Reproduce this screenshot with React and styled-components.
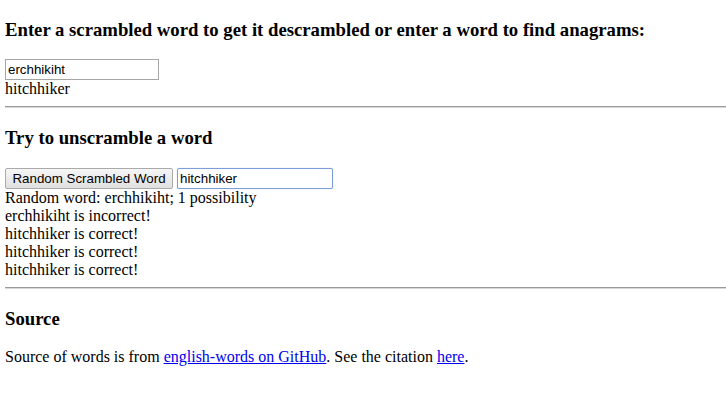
import React from "react";
import styled, { createGlobalStyle } from "styled-components";

const Global = createGlobalStyle`
  html, body { background: #fff; }
  body {
    margin: 0 0 8px 5px;
    font-family: "Liberation Serif", "Times New Roman", serif;
    font-size: 16px;
    color: #000;
  }
`;

const Heading = styled.h3`
  font-family: "Liberation Serif", "Times New Roman", serif;
  font-size: 18.72px;
  font-weight: bold;
  line-height: normal;
  margin: 18.72px 0;
`;

const Rule = styled.hr`
  margin: 8px 0;
  border: none;
  border-top: 1px solid #9a9a9a;
  border-bottom: 1px solid #d8d8d8;
  height: 0;
`;

const Controls = styled.div`
  display: flex;
  align-items: center;
  gap: 4px;
`;

const TextInput = styled.input`
  box-sizing: border-box;
  display: block;
  width: ${(p) => p.$w}px;
  height: 21px;
  padding: 1px 2px;
  font-family: "Liberation Sans", Arial, sans-serif;
  font-size: 13.33px;
  color: #000;
  background: #fff;
  border: 1px solid ${(p) => (p.$focused ? "#7b9ed8" : "#a6a6a6")};
  border-radius: ${(p) => (p.$focused ? "2px" : "0")};
  box-shadow: ${(p) => (p.$focused ? "0 0 1px #a9c3ea" : "none")};
  outline: none;
  margin: 0;
`;

const Button = styled.button`
  box-sizing: border-box;
  height: 21px;
  width: 168px;
  padding: 1px 6px;
  margin: 0;
  font-family: "Liberation Sans", Arial, sans-serif;
  font-size: 13.33px;
  color: #000;
  background: linear-gradient(#f6f6f6, #e0e0e0);
  border: 1px solid #aaaaaa;
  border-radius: 2px;
  white-space: nowrap;
`;

const Line = styled.div`
  line-height: normal;
`;

const Para = styled.p`
  margin: 16px 0;
  line-height: normal;
`;

const Link = styled.a`
  color: #0000ee;
  text-decoration: underline;
`;

const results = [
  "erchhikiht is incorrect!",
  "hitchhiker is correct!",
  "hitchhiker is correct!",
  "hitchhiker is correct!",
];

export default function App() {
  return (
    <>
      <Global />
      <Heading>
        Enter a scrambled word to get it descrambled or enter a word to find anagrams:
      </Heading>
      <TextInput $w={154} defaultValue="erchhikiht" />
      <Line>hitchhiker</Line>
      <Rule />
      <Heading>Try to unscramble a word</Heading>
      <Controls>
        <Button>Random Scrambled Word</Button>
        <TextInput $w={156} $focused defaultValue="hitchhiker" />
      </Controls>
      <Line>Random word: erchhikiht; 1 possibility</Line>
      {results.map((r, i) => (
        <Line key={i}>{r}</Line>
      ))}
      <Rule />
      <Heading>Source</Heading>
      <Para>
        Source of words is from <Link href="#">english-words on GitHub</Link>. See the
        citation <Link href="#">here</Link>.
      </Para>
    </>
  );
}
